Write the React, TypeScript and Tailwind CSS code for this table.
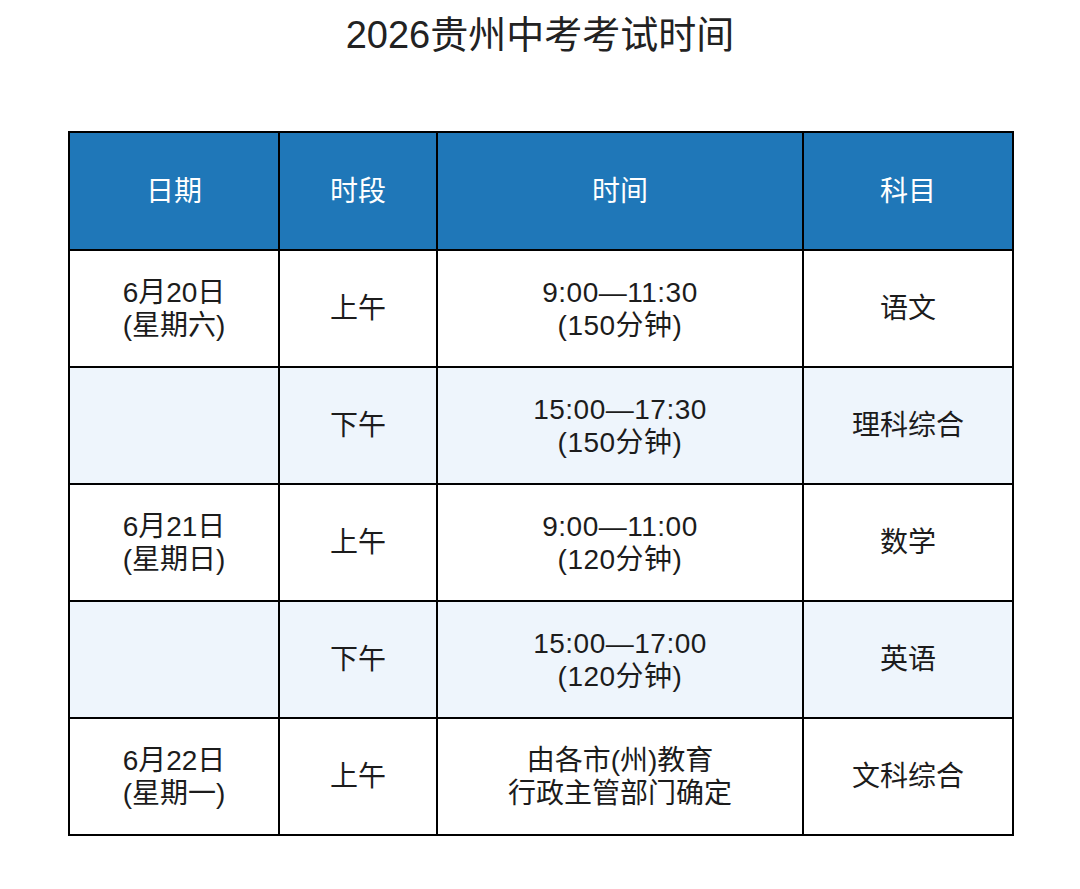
import React from 'react';

type Row = {
  date?: [string, string];
  period: string;
  time: [string, string];
  subject: string;
  striped: boolean;
  numeric: boolean;
};

const rows: Row[] = [
  { date: ['6月20日', '(星期六)'], period: '上午', time: ['9:00—11:30', '(150分钟)'], subject: '语文', striped: false, numeric: true },
  { period: '下午', time: ['15:00—17:30', '(150分钟)'], subject: '理科综合', striped: true, numeric: true },
  { date: ['6月21日', '(星期日)'], period: '上午', time: ['9:00—11:00', '(120分钟)'], subject: '数学', striped: false, numeric: true },
  { period: '下午', time: ['15:00—17:00', '(120分钟)'], subject: '英语', striped: true, numeric: true },
  { date: ['6月22日', '(星期一)'], period: '上午', time: ['由各市(州)教育', '行政主管部门确定'], subject: '文科综合', striped: false, numeric: false },
];

const font = "font-['Liberation_Sans','Noto_Sans_CJK_SC',sans-serif]";

export default function App() {
  return (
    <div className={`w-[1080px] h-[889px] bg-white ${font} text-[#1c1c1c]`}>
      <h1 className="pt-[15px] text-center text-[38px] leading-[40px] font-normal text-[#222]">
        2026贵州中考考试时间
      </h1>
      <div className="pl-[68px] pt-[76px]">
        <table className="w-[944px] table-fixed border-collapse border-2 border-black text-[28px] leading-[33px]">
          <colgroup>
            <col className="w-[210px]" />
            <col className="w-[158px]" />
            <col className="w-[366px]" />
            <col className="w-[210px]" />
          </colgroup>
          <thead>
            <tr className="h-[118px] bg-[#1f77b8] text-white">
              <th className="border-2 border-black font-normal">日期</th>
              <th className="border-2 border-black font-normal">时段</th>
              <th className="border-2 border-black font-normal">时间</th>
              <th className="border-2 border-black font-normal">科目</th>
            </tr>
          </thead>
          <tbody>
            {rows.map((r, i) => (
              <tr key={i} className={`h-[117px] ${r.striped ? 'bg-[#eef5fc]' : 'bg-white'}`}>
                <td className="border-2 border-black text-center">
                  {r.date && (
                    <>
                      <div>{r.date[0]}</div>
                      <div>{r.date[1]}</div>
                    </>
                  )}
                </td>
                <td className="border-2 border-black text-center">{r.period}</td>
                <td className={`border-2 border-black text-center ${r.numeric ? 'tracking-[0.5px]' : ''}`}>
                  <div>{r.time[0]}</div>
                  <div>{r.time[1]}</div>
                </td>
                <td className="border-2 border-black text-center">{r.subject}</td>
              </tr>
            ))}
          </tbody>
        </table>
      </div>
    </div>
  );
}
